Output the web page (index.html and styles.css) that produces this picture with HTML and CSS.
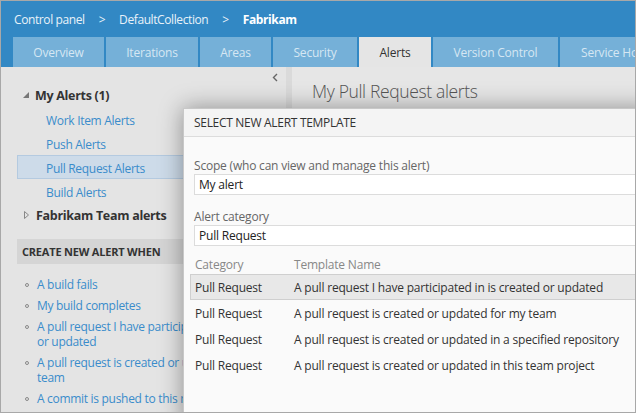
FILE: index.html
```html
<!DOCTYPE html>
<html>
<head>
<meta charset="utf-8">
<link rel="stylesheet" href="styles.css">
</head>
<body>
<div class="frame">
  <div class="topbar">
    <div class="crumbs">
      <span>Control panel</span><span class="sep">&gt;</span><span>DefaultCollection</span><span class="sep">&gt;</span><span class="cur">Fabrikam</span>
    </div>
    <div class="tabs">
      <div class="tab t-ov">Overview</div>
      <div class="tab t-it">Iterations</div>
      <div class="tab t-ar">Areas</div>
      <div class="tab t-se">Security</div>
      <div class="tab t-al active">Alerts</div>
      <div class="tab t-vc">Version Control</div>
      <div class="tab t-sh">Service Hooks</div>
    </div>
  </div>
  <div class="main">
    <div class="left">
      <div class="collapse">
        <svg width="6" height="9" viewBox="0 0 6 9"><path d="M5 1 L1.5 4.5 L5 8" fill="none" stroke="#666" stroke-width="1.4"/></svg>
      </div>
      <div class="tree">
        <div class="node group">
          <svg class="tri" width="6" height="6" viewBox="0 0 6 6"><path d="M6 0 L6 6 L0 6 Z" fill="#777"/></svg>
          <span>My Alerts (1)</span>
        </div>
        <div class="node leaf"><span>Work Item Alerts</span></div>
        <div class="node leaf"><span>Push Alerts</span></div>
        <div class="node leaf sel"><span>Pull Request Alerts</span></div>
        <div class="node leaf"><span>Build Alerts</span></div>
        <div class="node group">
          <svg class="tri closed" width="5" height="8" viewBox="0 0 5 8"><path d="M0.5 0.5 L4.5 4 L0.5 7.5 Z" fill="none" stroke="#888" stroke-width="1"/></svg>
          <span>Fabrikam Team alerts</span>
        </div>
      </div>
      <div class="band">CREATE NEW ALERT WHEN</div>
      <ul class="when">
        <li><span class="dot"></span><span class="lk">A build fails</span></li>
        <li><span class="dot"></span><span class="lk">My build completes</span></li>
        <li><span class="dot"></span><span class="lk">A pull request I have participated in is created<br>or updated</span></li>
        <li><span class="dot"></span><span class="lk">A pull request is created or updated for my<br>team</span></li>
        <li><span class="dot"></span><span class="lk">A commit is pushed to this repository</span></li>
      </ul>
    </div>
    <div class="splitter"></div>
    <div class="right">
      <h1 class="title">My Pull Request alerts</h1>
    </div>
  </div>

  <div class="dialog">
    <div class="dlg-head">SELECT NEW ALERT TEMPLATE</div>
    <div class="dlg-body">
      <div class="label">Scope (who can view and manage this alert)</div>
      <div class="input">My alert</div>
      <div class="label">Alert category</div>
      <div class="input">Pull Request</div>
      <div class="grid">
        <div class="row head"><div class="c1">Category</div><div class="c2">Template Name</div></div>
        <div class="row hot"><div class="c1">Pull Request</div><div class="c2">A pull request I have participated in is created or updated</div></div>
        <div class="row"><div class="c1">Pull Request</div><div class="c2">A pull request is created or updated for my team</div></div>
        <div class="row"><div class="c1">Pull Request</div><div class="c2">A pull request is created or updated in a specified repository</div></div>
        <div class="row"><div class="c1">Pull Request</div><div class="c2">A pull request is created or updated in this team project</div></div>
      </div>
    </div>
  </div>
</div>
</body>
</html>
```

FILE: styles.css
```css
* { box-sizing: border-box; }
html, body { margin: 0; padding: 0; }
body {
  font-family: "Open Sans", "Noto Sans", "DejaVu Sans", sans-serif;
  font-size: 12px;
  letter-spacing: -0.25px;
  color: #333;
  background: #fff;
}
.frame {
  width: 636px;
  height: 413px;
  border: 1px solid #a8a8a8;
  position: relative;
  overflow: hidden;
  background: #e4e4e4;
  display: flex;
  flex-direction: column;
}
.topbar {
  background: #3288c4;
  flex: none;
}
.crumbs {
  height: 36px;
  display: flex;
  align-items: center;
  padding-left: 13px;
  color: #e9f2f9;
  font-size: 12px;
  letter-spacing: -0.4px;
}
.crumbs .sep { margin: 0 14px; }
.crumbs .cur { font-weight: 700; color: #fff; }
.tabs {
  display: flex;
  gap: 2px;
  padding-left: 12px;
  height: 30px;
  overflow: hidden;
  white-space: nowrap;
}
.tab {
  background: #75b0d8;
  color: #d6e7f3;
  font-size: 12px;
  letter-spacing: -0.2px;
  display: flex;
  align-items: center;
  justify-content: center;
  flex: none;
}
.tab.active { background: #e5e5e5; color: #333; }
.t-ov { width: 91px; }
.t-it { width: 92px; }
.t-ar { width: 71px; }
.t-se { width: 84px; }
.t-al { width: 72px; }
.t-vc { width: 125px; }
.t-sh { width: 110px; justify-content: flex-start; padding-left: 21px; }

.main {
  flex: 1;
  display: flex;
  min-height: 0;
}
.left {
  width: 285px;
  flex: none;
  background: #e4e4e4;
  padding-left: 16px;
  position: relative;
}
.collapse {
  display: flex;
  justify-content: flex-end;
  padding: 6px 8px 0 0;
  height: 16px;
}
.node {
  height: 24px;
  display: flex;
  align-items: center;
  white-space: nowrap;
}
.node.group { font-weight: 700; color: #333; font-size: 12.5px; letter-spacing: -0.3px; }
.node.group .tri { margin: 0 6px 0 6px; }
.node.group .tri.closed { margin: 0 7px 0 7px; }
.node.leaf {
  color: #3a8ccb;
  padding-left: 28px;
  padding-top: 3px;
  border: 1px solid transparent;
  letter-spacing: -0.3px;
}
.node.leaf.sel {
  background: #cddbe9;
  border-color: #b4cae0;
}
.band {
  margin-top: 12px;
  height: 25px;
  background: #d5d5d5;
  display: flex;
  align-items: center;
  padding-left: 5px;
  font-weight: 700;
  font-size: 11px;
  letter-spacing: -0.2px;
  color: #333;
}
.when {
  list-style: none;
  margin: 13px 0 0 0;
  padding: 0;
}
.when li {
  display: flex;
  align-items: flex-start;
  line-height: 15px;
  margin-bottom: 6px;
  white-space: nowrap;
}
.when .dot {
  width: 4px;
  height: 4px;
  border: 1px solid #888;
  border-radius: 50%;
  margin: 6px 0 0 8px;
  flex: none;
}
.when .lk {
  color: #3a8ccb;
  margin-left: 8px;
  font-size: 12px;
  letter-spacing: -0.3px;
}
.splitter {
  width: 6px;
  flex: none;
  background: #dadada;
}
.right {
  flex: 1;
  background: #e6e6e6;
  padding: 12px 0 0 20px;
}
.title {
  margin: 0;
  font-size: 17.5px;
  letter-spacing: -0.35px;
  font-weight: 300;
  color: #555;
  white-space: nowrap;
}

.dialog {
  position: absolute;
  left: 182px;
  top: 107px;
  width: 470px;
  height: 320px;
  background: #fafafa;
  border: 1px solid #c8c8c8;
  box-shadow: 0 0 22px rgba(0,0,0,0.38);
}
.dlg-head {
  height: 28px;
  background: #f4f4f4;
  border-bottom: 1px solid #dcdcdc;
  display: flex;
  align-items: center;
  padding-left: 10px;
  font-size: 12px;
  letter-spacing: -0.3px;
  color: #333;
}
.dlg-body {
  padding: 21px 0 0 10px;
}
.label {
  color: #666;
  line-height: 16px;
  letter-spacing: -0.2px;
}
.input {
  margin-top: 0;
  height: 21px;
  background: #fff;
  border: 1px solid #dcdcdc;
  border-right: none;
  padding-left: 4px;
  display: flex;
  align-items: center;
  color: #222;
  margin-bottom: 14px;
  letter-spacing: -0.2px;
}
.grid { margin-top: -6px; margin-left: -4px; }
.row {
  display: flex;
  height: 26px;
  align-items: center;
  border: 1px solid transparent;
  border-right: none;
  white-space: nowrap;
  letter-spacing: -0.2px;
}
.row .c1 { width: 103px; padding-left: 4px; flex: none; }
.row .c2 { flex: 1; }
.row.head { color: #888; height: 20px; }
.row.hot { background: #e8e8e8; border-color: #cfcfcf; }
```
